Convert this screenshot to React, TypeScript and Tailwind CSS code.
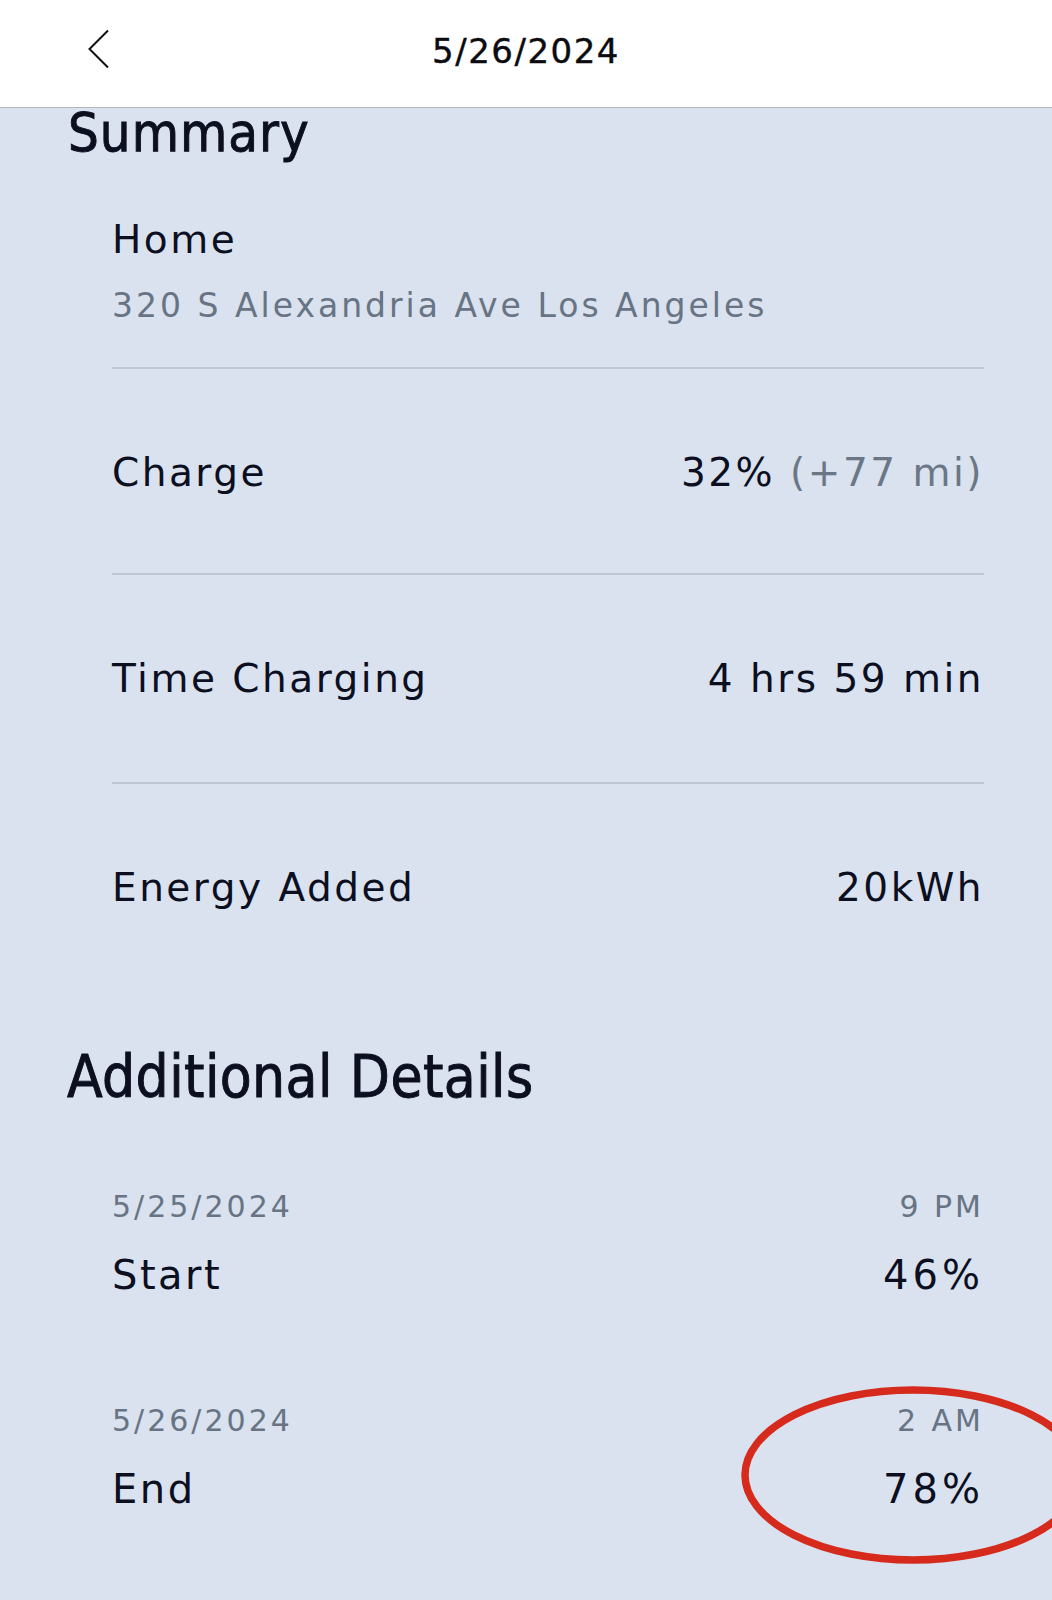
const body = "font-['DejaVu_Sans','Liberation_Sans',sans-serif]";
const cond = "font-['DejaVu_Sans_Condensed','DejaVu_Sans',sans-serif] font-stretch-condensed [-webkit-text-stroke:0.9px_#0c0f1f]";

const SummaryRow = ({ label, children, h }: { label: string; children: React.ReactNode; h: string }) => (
    <div className={`flex items-start justify-between pt-[84px] ${h}`}>
        <p className="text-[39px] leading-none tracking-[2.5px] text-[#0c0f1f]">{label}</p>
        <p className="text-[39px] leading-none tracking-[2.5px] text-[#0c0f1f]">{children}</p>
    </div>
);

const Divider = () => <div className="h-[2px] bg-[#bdc6d2]" />;

const DetailItem = ({ date, time, label, value, className }: { date: string; time: string; label: string; value: string; className?: string }) => (
    <div className={className}>
        <div className="flex justify-between text-[30px] leading-none tracking-[3px] text-[#687484]">
            <span>{date}</span>
            <span>{time}</span>
        </div>
        <div className="mt-[33px] flex justify-between text-[40px] leading-none tracking-[2.5px] text-[#0c0f1f]">
            <span>{label}</span>
            <span className="tracking-[4px]">{value}</span>
        </div>
    </div>
);

export default function App() {
    return (
        <div className={`relative min-h-[1600px] w-full overflow-hidden bg-[#d9e2ee] ${body}`}>
            <header className="grid h-[108px] grid-cols-[1fr_auto_1fr] items-center border-b border-[#b4b8be] bg-white pb-[6px]">
                <button className="pl-[87px] text-left">
                    <svg width="24" height="40" viewBox="0 0 24 40" fill="none" className="-mt-[3px]">
                        <polyline points="21,1.5 2.5,20 21,38.5" stroke="#111" strokeWidth="2" strokeLinejoin="miter" />
                    </svg>
                </button>
                <h1 className="text-[34px] leading-none tracking-[1.5px] text-[#0c0c10] [-webkit-text-stroke:0.4px_#0c0c10]">5/26/2024</h1>
                <div />
            </header>

            <main>
                <h2 className={`-mt-[2px] pl-[68px] text-[54px] leading-none tracking-[1px] text-[#0c0f1f] ${cond}`}>Summary</h2>

                <section className="ml-[112px] w-[872px]">
                    <p className="mt-[60px] text-[39px] leading-none tracking-[2.5px] text-[#0c0f1f]">Home</p>
                    <p className="mt-[30px] text-[33px] leading-none tracking-[3px] text-[#687484]">320 S Alexandria Ave Los Angeles</p>
                    <div className="mt-[45px]">
                        <Divider />
                    </div>
                    <SummaryRow label="Charge" h="h-[204px]">
                        32% <span className="text-[#6c7786]">(+77 mi)</span>
                    </SummaryRow>
                    <Divider />
                    <SummaryRow label="Time Charging" h="h-[207px]">
                        4 hrs 59 min
                    </SummaryRow>
                    <Divider />
                    <SummaryRow label="Energy Added" h="h-[123px]">
                        20kWh
                    </SummaryRow>
                </section>

                <h2 className={`mt-[141px] pl-[67px] text-[58px] leading-none tracking-[0.4px] text-[#0c0f1f] ${cond}`}>Additional Details</h2>

                <section className="ml-[112px] w-[872px]">
                    <DetailItem className="mt-[86px]" date="5/25/2024" time="9 PM" label="Start" value="46%" />
                    <DetailItem className="mt-[111px]" date="5/26/2024" time="2 AM" label="End" value="78%" />
                </section>
            </main>

            <svg className="pointer-events-none absolute left-[737px] top-[1382px]" width="360" height="190" viewBox="0 0 360 190" fill="none">
                <ellipse cx="176" cy="93" rx="168" ry="85" stroke="#d62a1c" strokeWidth="7.5" />
            </svg>
        </div>
    );
}
